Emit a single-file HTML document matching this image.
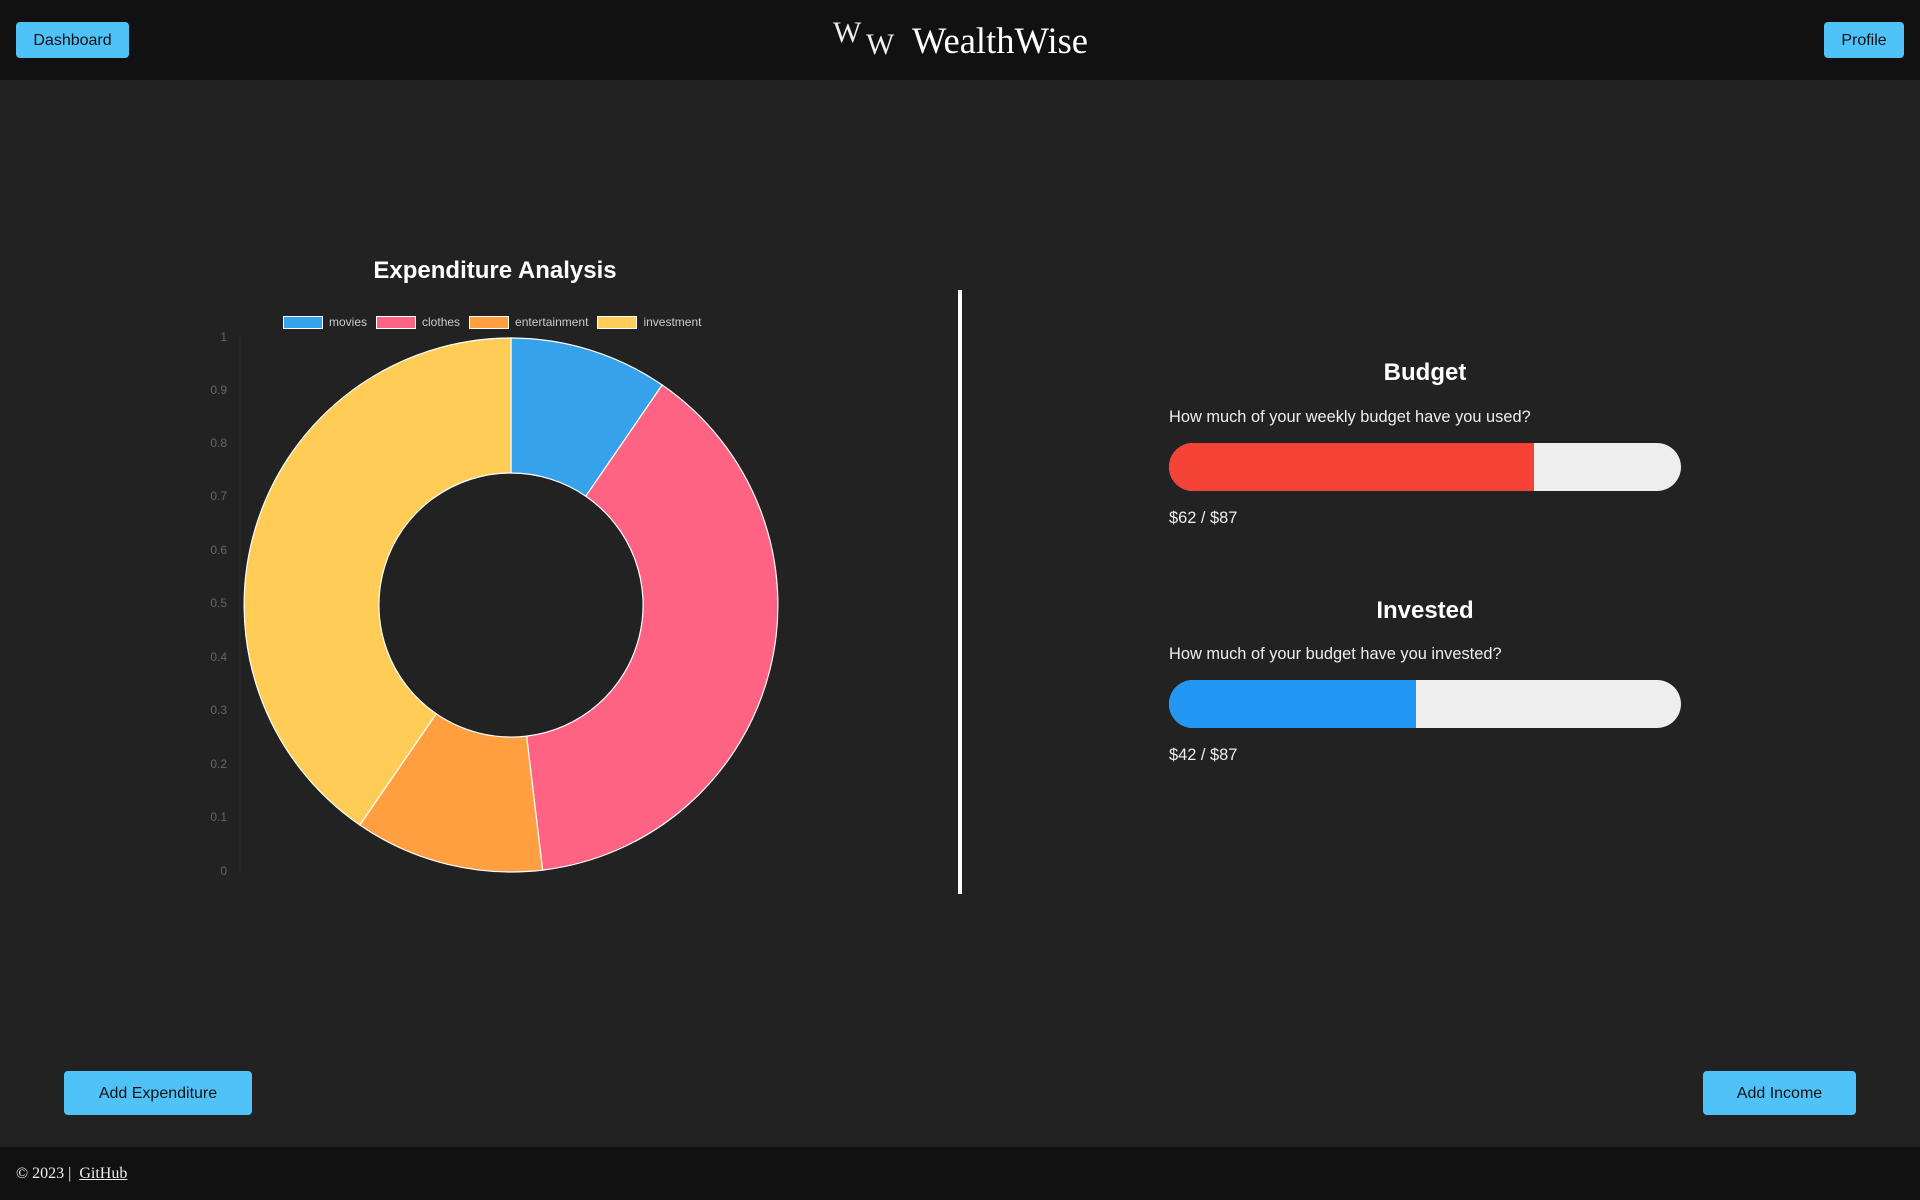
<!DOCTYPE html>
<html><head><meta charset="utf-8"><style>
*{margin:0;padding:0;box-sizing:border-box}
body{width:1920px;height:1200px;background:#222;font-family:"Liberation Sans",sans-serif;color:#fff;position:relative;overflow:hidden}
.hdr{position:absolute;left:0;top:0;width:1920px;height:80px;background:#111}
.btn{position:absolute;background:#4fc3f7;color:#111;border-radius:4px;font-size:16px;display:flex;align-items:center;justify-content:center;padding-top:2px}
.abs{position:absolute}
.ftr{position:absolute;left:0;top:1147px;width:1920px;height:53px;background:#111;font-family:"Liberation Serif",serif;font-size:16px;color:#eee}
h2{position:absolute;font-size:24px;font-weight:bold;text-align:center}
.q{position:absolute;left:1169px;font-size:16.4px;color:#eee}
.bar{position:absolute;left:1169px;width:512px;height:48px;border-radius:24px;background:#eee;overflow:hidden}
.bar div{height:100%}
.yl{position:absolute;left:200px;width:27px;text-align:right;font-size:12px;color:#666}
</style></head><body>
<div class="hdr">
 <div class="btn" style="left:16px;top:22px;width:113px;height:36px">Dashboard</div>
 <div class="btn" style="left:1824px;top:22px;width:80px;height:36px">Profile</div>
 <div class="abs" style="left:833px;top:16px;font-family:'Liberation Serif',serif;font-size:30px;color:#eee">W</div>
 <div class="abs" style="left:866px;top:28px;font-family:'Liberation Serif',serif;font-size:30px;color:#eee">W</div>
 <div class="abs" style="left:912px;top:19px;font-family:'Liberation Serif',serif;font-size:36.5px;color:#fff">WealthWise</div>
</div>
<h2 style="left:295px;top:257px;width:400px">Expenditure Analysis</h2>
<div class="abs" style="left:283px;top:315px;font-size:12px;color:#ccc;display:flex;align-items:center;gap:6px;white-space:nowrap">
 <span style="display:inline-block;width:40px;height:13px;background:#36a2eb;border:1px solid #fff"></span>movies
 <span style="display:inline-block;width:40px;height:13px;background:#ff6384;border:1px solid #fff;margin-left:3px"></span>clothes
 <span style="display:inline-block;width:40px;height:13px;background:#ff9f40;border:1px solid #fff;margin-left:3px"></span>entertainment
 <span style="display:inline-block;width:40px;height:13px;background:#ffcd56;border:1px solid #fff;margin-left:3px"></span>investment
</div>
<div class="yl" style="top:330px">1</div><div class="yl" style="top:383px">0.9</div><div class="yl" style="top:436px">0.8</div><div class="yl" style="top:489px">0.7</div><div class="yl" style="top:543px">0.6</div><div class="yl" style="top:596px">0.5</div><div class="yl" style="top:650px">0.4</div><div class="yl" style="top:703px">0.3</div><div class="yl" style="top:757px">0.2</div><div class="yl" style="top:810px">0.1</div><div class="yl" style="top:864px">0</div>
<svg class="abs" style="left:0;top:0" width="1920" height="1200">
<line x1="240" y1="337" x2="240" y2="871" stroke="#2a2a2a"/>
<g stroke="#fff" stroke-width="1.2">
<path d="M511 338 A267 267 0 0 1 662.2 385 L585.8 496.2 A132 132 0 0 0 511 473 Z" fill="#36a2eb"/>
<path d="M662.2 385 A267 267 0 0 1 542.6 870.1 L526.6 736.1 A132 132 0 0 0 585.8 496.2 Z" fill="#ff6384"/>
<path d="M542.6 870.1 A267 267 0 0 1 359.8 825 L436.2 713.8 A132 132 0 0 0 526.6 736.1 Z" fill="#ff9f40"/>
<path d="M359.8 825 A267 267 0 0 1 511 338 L511 473 A132 132 0 0 0 436.2 713.8 Z" fill="#ffcd56"/>
</g>
<rect x="958" y="290" width="4" height="604" fill="#fff"/>
</svg>
<h2 style="left:1225px;top:359px;width:400px">Budget</h2>
<div class="q" style="top:408px">How much of your weekly budget have you used?</div>
<div class="bar" style="top:443px"><div style="width:365px;background:#f44336"></div></div>
<div class="q" style="top:509px">$62 / $87</div>
<h2 style="left:1225px;top:597px;width:400px">Invested</h2>
<div class="q" style="top:645px">How much of your budget have you invested?</div>
<div class="bar" style="top:680px"><div style="width:247px;background:#2196f3"></div></div>
<div class="q" style="top:746px">$42 / $87</div>
<div class="btn" style="left:64px;top:1071px;width:188px;height:44px">Add Expenditure</div>
<div class="btn" style="left:1703px;top:1071px;width:153px;height:44px">Add Income</div>
<div class="ftr"><div class="abs" style="left:16px;top:18px">© 2023 | &nbsp;<span style="text-decoration:underline">GitHub</span></div></div>
</body></html>
